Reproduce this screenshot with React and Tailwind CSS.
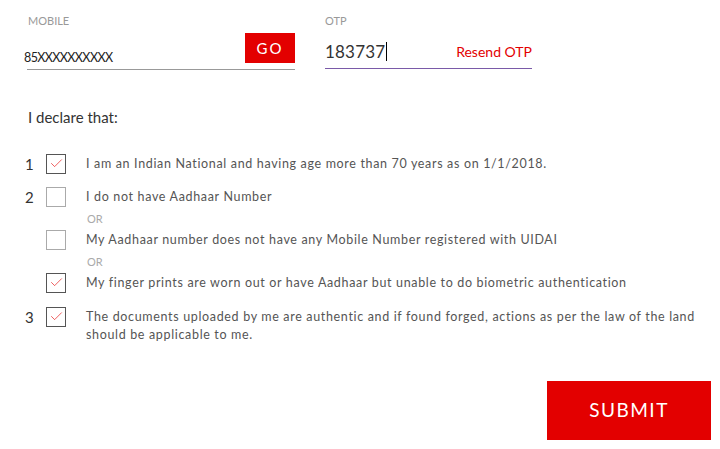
import { Check } from 'lucide-react';

const font = { fontFamily: 'Lato, "Open Sans", sans-serif' };

function Box({ checked, dark }) {
  return (
    <div
      className={`w-[20px] h-[20px] shrink-0 border flex items-center justify-center bg-white ${
        dark ? 'border-[#555]' : 'border-[#aaa]'
      }`}
    >
      {checked && <Check size={15} strokeWidth={1} className="text-[#e30000]" />}
    </div>
  );
}

function Row({ num, checked, dark, children }) {
  return (
    <div className="flex items-start">
      <div className="w-[21px] text-[15px] leading-[20px] text-[#333]">{num}</div>
      <Box checked={checked} dark={dark} />
      <div className="ml-[20px] text-[12.5px] leading-[18px] tracking-[0.66px] text-[#555] pt-[1px]">{children}</div>
    </div>
  );
}

function Or() {
  return <div className="ml-[62px] h-[23px] pt-[3px] flex items-center text-[11px] text-[#aaa]">OR</div>;
}

export default function App() {
  return (
    <div className="w-[720px] h-[449px] bg-white relative overflow-hidden" style={font}>
      <div className="pt-[15px] pl-[27px] flex gap-[30px]">
        <div className="w-[268px]">
          <div className="text-[11px] leading-[12px] text-[#999] pl-[1px]">MOBILE</div>
          <div className="flex items-end justify-between border-b border-[#999] pb-[5px] mt-[6px]">
            <span className="-ml-[3px] text-[12.5px] leading-[14px] tracking-[-0.6px] text-[#222] mb-[-1px]">85XXXXXXXXXX</span>
            <button className="w-[50px] h-[30px] bg-[#e30000] text-white text-[15px] tracking-[2px] mb-[1px]">GO</button>
          </div>
        </div>
        <div className="w-[207px]">
          <div className="text-[11px] leading-[12px] text-[#999]">OTP</div>
          <div className="flex items-center justify-between border-b border-[#7a5aa8] h-[42px] pt-[8px]">
            <span className="flex items-center text-[17px] text-[#333] tracking-[0.2px]">
              183737<span className="inline-block w-[1px] h-[19px] bg-black ml-[1px]" />
            </span>
            <span className="text-[14px] text-[#e30000]">Resend OTP</span>
          </div>
        </div>
      </div>

      <div className="pl-[28px] mt-[36px] text-[15px] text-[#333]">I declare that:</div>

      <div className="pl-[25px] mt-[25px] flex flex-col">
        <Row num="1" checked dark>I am an Indian National and having age more than 70 years as on 1/1/2018.</Row>
        <div className="h-[13px]" />
        <Row num="2">I do not have Aadhaar Number</Row>
        <Or />
        <Row>My Aadhaar number does not have any Mobile Number registered with UIDAI</Row>
        <Or />
        <Row checked dark>My finger prints are worn out or have Aadhaar but unable to do biometric authentication</Row>
        <div className="h-[14px]" />
        <Row num="3" checked dark>
          The documents uploaded by me are authentic and if found forged, actions as per the law of the land
          <br />
          should be applicable to me.
        </Row>
      </div>

      <div className="absolute left-[547px] top-[381px]">
        <button className="w-[164px] h-[59px] bg-[#e30000] text-white text-[19px] tracking-[1.5px]">SUBMIT</button>
      </div>
    </div>
  );
}
